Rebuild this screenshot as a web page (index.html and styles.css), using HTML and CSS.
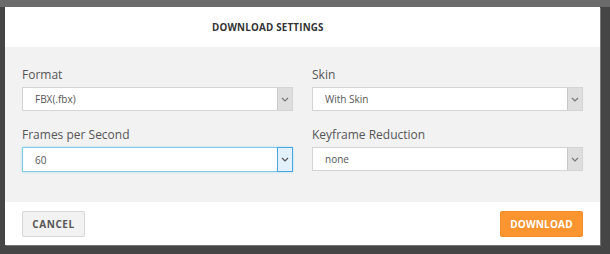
FILE: index.html
```html
<!DOCTYPE html>
<html>
<head>
<meta charset="utf-8">
<link rel="stylesheet" href="styles.css">
</head>
<body>
<div class="backdrop">
  <div class="modal">
    <div class="modal-header"><h1 class="title">DOWNLOAD SETTINGS</h1></div>
    <div class="modal-body">
      <div class="field">
        <label class="label">Format</label>
        <div class="select"><span class="value">FBX(.fbx)</span><span class="arrow"><svg width="8" height="5" viewBox="0 0 8 5"><path d="M1 1l3 3 3-3" fill="none" stroke="#777" stroke-width="1.2"/></svg></span></div>
      </div>
      <div class="field">
        <label class="label">Skin</label>
        <div class="select"><span class="value">With Skin</span><span class="arrow"><svg width="8" height="5" viewBox="0 0 8 5"><path d="M1 1l3 3 3-3" fill="none" stroke="#777" stroke-width="1.2"/></svg></span></div>
      </div>
      <div class="field">
        <label class="label">Frames per Second</label>
        <div class="select focus"><span class="value">60</span><span class="arrow"><svg width="8" height="5" viewBox="0 0 8 5"><path d="M1 1l3 3 3-3" fill="none" stroke="#555" stroke-width="1.2"/></svg></span></div>
      </div>
      <div class="field">
        <label class="label">Keyframe Reduction</label>
        <div class="select"><span class="value">none</span><span class="arrow"><svg width="8" height="5" viewBox="0 0 8 5"><path d="M1 1l3 3 3-3" fill="none" stroke="#777" stroke-width="1.2"/></svg></span></div>
      </div>
    </div>
    <div class="modal-footer">
      <button class="btn btn-cancel">CANCEL</button>
      <button class="btn btn-download">DOWNLOAD</button>
    </div>
  </div>
</div>
</body>
</html>
```
FILE: styles.css
```css
html, body {
  margin: 0;
  padding: 0;
}
body {
  width: 610px;
  height: 254px;
  overflow: hidden;
  background: linear-gradient(to bottom, #6b6b6b 0, #6b6b6b 7px, #454545 7px);
  font-family: "Open Sans", "DejaVu Sans", sans-serif;
}
.backdrop {
  padding: 7px 10px 9px 5px;
}
.modal {
  width: 595px;
  height: 238px;
  background: #fff;
  display: flex;
  flex-direction: column;
  box-shadow: 1px 1px 0 #777;
}
.modal-header {
  height: 40px;
  display: flex;
  align-items: center;
  padding-left: 207px;
}
.title {
  margin: 0;
  font-size: 9.8px;
  font-weight: 700;
  color: #333;
  letter-spacing: 0.2px;
}
.modal-body {
  background: #f2f2f2;
  height: 155px;
  box-sizing: border-box;
  padding: 18px 17px 0 17px;
  display: grid;
  grid-template-columns: 271px 271px;
  column-gap: 19px;
  row-gap: 14px;
  align-content: start;
}
.field {
  display: flex;
  flex-direction: column;
}
.label {
  font-size: 12px;
  color: #555;
  line-height: 16px;
  height: 16px;
  padding-top: 2px;
  margin-bottom: 4px;
}
.select {
  height: 24px;
  box-sizing: border-box;
  border: 1px solid #d4d4d4;
  background: #fff;
  display: flex;
  align-items: stretch;
}
.value {
  flex: 1;
  font-size: 10px;
  color: #555;
  padding-left: 12px;
  display: flex;
  align-items: center;
}
.arrow {
  width: 14px;
  background: #dedede;
  border-left: 1px solid #c8c8c8;
  display: flex;
  align-items: center;
  justify-content: center;
}
.select.focus {
  border-color: #7fcbec;
  box-shadow: 0 0 2px #a9dcf2;
  height: 25px;
}
.select.focus .arrow {
  background: #e3f1fb;
  border: 1px solid #4aa6e0;
  margin: -1px -1px -1px 0;
}
.modal-footer {
  flex: 1;
  display: flex;
  justify-content: space-between;
  align-items: flex-start;
  padding: 9px 17px 0 17px;
}
.btn {
  height: 26px;
  font-family: "Open Sans", "DejaVu Sans", sans-serif;
  font-size: 10px;
  font-weight: 700;
  border-radius: 2px;
  cursor: pointer;
  padding: 0;
}
.btn-cancel {
  width: 63px;
  background: #f2f2f2;
  border: 1px solid #d6d6d6;
  color: #555;
  letter-spacing: 0.6px;
}
.btn-download {
  width: 83px;
  background: #fc9430;
  border: 1px solid #f58c28;
  color: #fff;
  letter-spacing: 0.2px;
}
```
